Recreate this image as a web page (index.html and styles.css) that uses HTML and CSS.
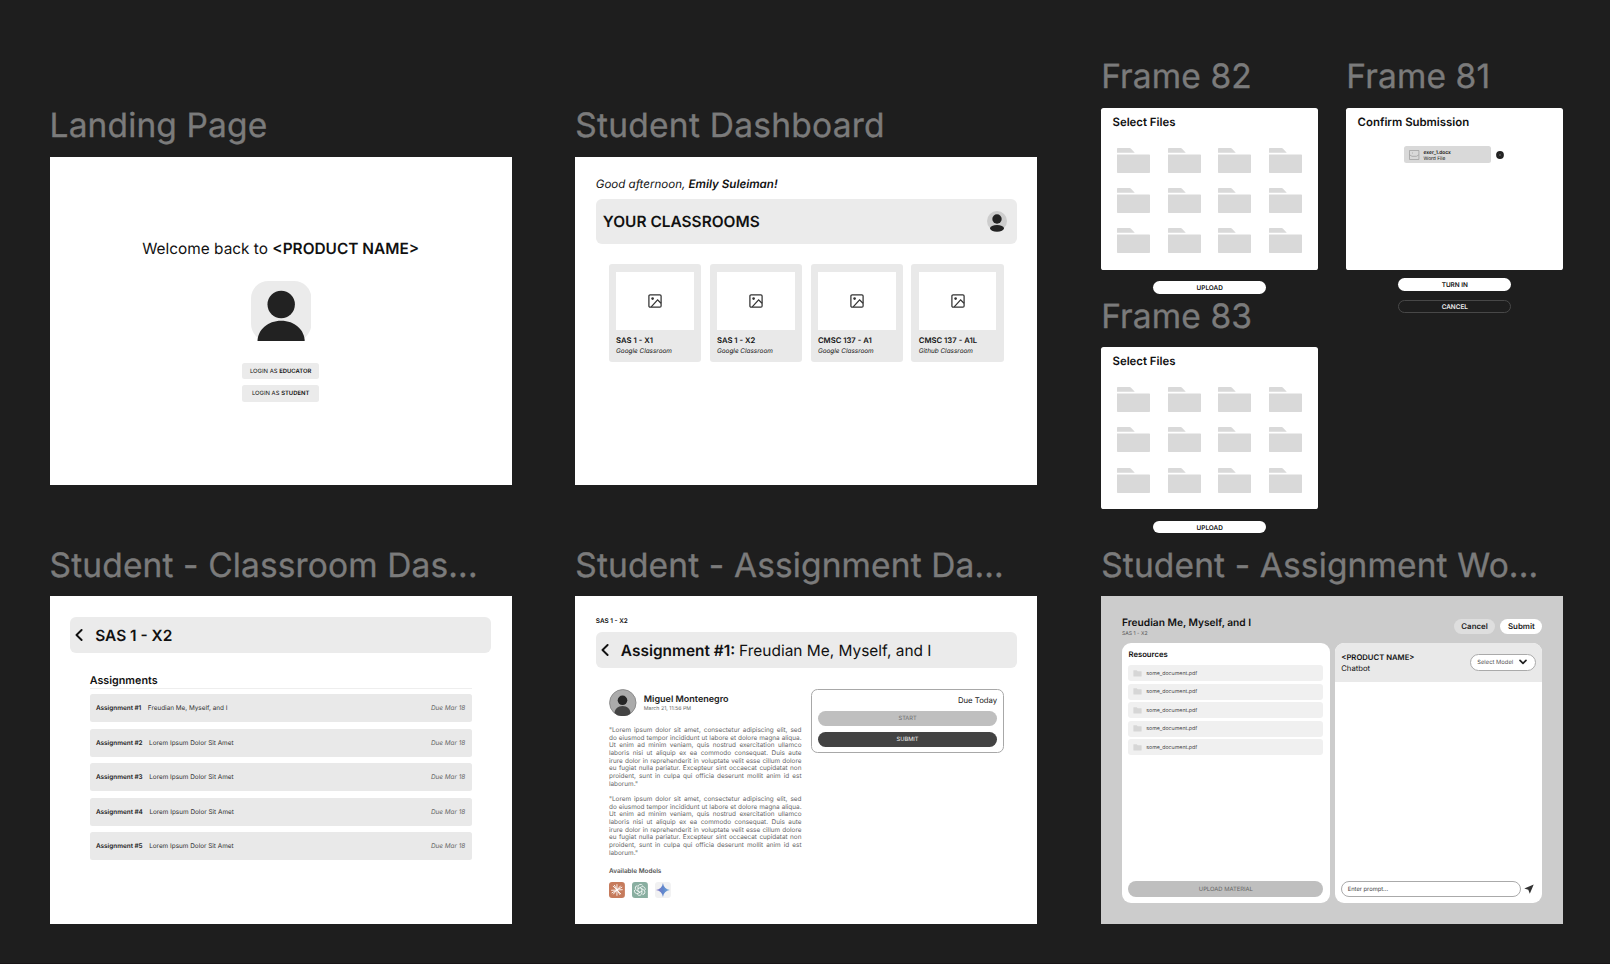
FILE: index.html
```html
<!DOCTYPE html>
<html lang="en">
<head>
<meta charset="utf-8">
<title>Classroom wireframes</title>
<link rel="stylesheet" href="styles.css">
</head>
<body>
<svg class="defs" aria-hidden="true">
  <symbol id="folder" viewBox="0 0 33 25"><path d="M0 .8Q0 0 .8 0H12.6Q13.3 0 13.8.5L17.8 4.8H0ZM0 6.4H32.2Q33 6.4 33 7.2V24.2Q33 25 32.2 25H.8Q0 25 0 24.2Z" fill="#d9d9d9"/></symbol>
  <symbol id="mini-folder" viewBox="0 0 9 7"><path d="M.4.6Q.4.2.8.2H3.6L4.6 1.3H8.2Q8.6 1.3 8.6 1.8V6Q8.6 6.5 8.1 6.5H.9Q.4 6.5.4 6Z" fill="#d6d6d6"/></symbol>
  <symbol id="picture" viewBox="0 0 14 14"><rect x=".9" y=".9" width="12.2" height="12.2" rx="1.2" fill="none" stroke="#333" stroke-width="1.25"/><circle cx="4.6" cy="4.6" r="1.3" fill="#333"/><path d="M3.2 12.8 9.6 5.8 13 9.3" fill="none" stroke="#333" stroke-width="1.25"/></symbol>
  <symbol id="back" viewBox="0 0 8 12"><path d="M6.6 1 1.5 6 6.6 11" fill="none" stroke="#111" stroke-width="1.9" stroke-linecap="round" stroke-linejoin="round"/></symbol>
</svg>
<main class="canvas">

  <section class="board at-landing">
    <h2 class="label label-high">Landing Page</h2>
    <div class="screen landing">
      <p class="welcome">Welcome back to <b>&lt;PRODUCT NAME&gt;</b></p>
      <svg class="portrait" viewBox="0 0 60.4 60.4"><rect width="60.4" height="60.4" rx="17.500" fill="#ebebeb"/><circle cx="30.2" cy="23.500" r="13.700" fill="#222"/><path d="M6.500 60.400C6.500 49 16.500 39.700 30.200 39.700S53.700 49 53.700 60.400Z" fill="#222"/></svg>
      <div class="login">LOGIN AS <b>EDUCATOR</b></div>
      <div class="login">LOGIN AS <b>STUDENT</b></div>
    </div>
  </section>

  <section class="board at-dashboard">
    <h2 class="label label-high label-wide">Student Dashboard</h2>
    <div class="screen dashboard">
      <p class="greeting">Good afternoon, <b>Emily Suleiman!</b></p>
      <header class="bar bar-tall"><span class="bar-title">YOUR CLASSROOMS</span>
        <svg class="user" viewBox="0 0 20 21"><circle cx="10" cy="10" r="10" fill="#cdcdcd"/><circle cx="10" cy="8" r="4.700" fill="#222"/><ellipse cx="10" cy="17.300" rx="7" ry="3.400" fill="#222"/></svg>
      </header>
      <div class="rooms">
        <article class="room"><div class="thumb"><svg><use href="#picture"/></svg></div><h3>SAS 1 - X1</h3><p>Google Classroom</p></article>
        <article class="room"><div class="thumb"><svg><use href="#picture"/></svg></div><h3>SAS 1 - X2</h3><p>Google Classroom</p></article>
        <article class="room"><div class="thumb"><svg><use href="#picture"/></svg></div><h3>CMSC 137 - A1</h3><p>Google Classroom</p></article>
        <article class="room"><div class="thumb"><svg><use href="#picture"/></svg></div><h3>CMSC 137 - A1L</h3><p>Github Classroom</p></article>
      </div>
    </div>
  </section>

  <section class="board dialog at-frame82">
    <h2 class="label label-high">Frame 82</h2>
    <div class="sheet"><h3>Select Files</h3>
      <div class="files">
        <svg><use href="#folder"/></svg><svg><use href="#folder"/></svg><svg><use href="#folder"/></svg><svg><use href="#folder"/></svg>
        <svg><use href="#folder"/></svg><svg><use href="#folder"/></svg><svg><use href="#folder"/></svg><svg><use href="#folder"/></svg>
        <svg><use href="#folder"/></svg><svg><use href="#folder"/></svg><svg><use href="#folder"/></svg><svg><use href="#folder"/></svg>
      </div>
    </div>
    <div class="action">UPLOAD</div>
  </section>

  <section class="board dialog at-frame81">
    <h2 class="label label-high">Frame 81</h2>
    <div class="sheet"><h3>Confirm Submission</h3>
      <div class="attached">
        <div class="doc">
          <svg viewBox="0 0 10.400 10"><path d="M.5.500H9.900V9.500H.5ZM.5 4.800 3 6.300H7.500L9.900 4.800M3 3H4" fill="none" stroke="#999" stroke-width=".7"/></svg>
          <div><b>exer_1.docx</b><span>Word File</span></div>
        </div>
        <svg class="remove" viewBox="0 0 8 8"><circle cx="4" cy="4" r="3.900" fill="#222"/><path d="M2.800 2.800 5.200 5.200M5.200 2.800 2.800 5.200" stroke="#666" stroke-width=".6"/></svg>
      </div>
    </div>
    <div class="action action-high">TURN IN</div>
    <div class="action action-outline">CANCEL</div>
  </section>

  <section class="board dialog at-frame83">
    <h2 class="label">Frame 83</h2>
    <div class="sheet"><h3>Select Files</h3>
      <div class="files">
        <svg><use href="#folder"/></svg><svg><use href="#folder"/></svg><svg><use href="#folder"/></svg><svg><use href="#folder"/></svg>
        <svg><use href="#folder"/></svg><svg><use href="#folder"/></svg><svg><use href="#folder"/></svg><svg><use href="#folder"/></svg>
        <svg><use href="#folder"/></svg><svg><use href="#folder"/></svg><svg><use href="#folder"/></svg><svg><use href="#folder"/></svg>
      </div>
    </div>
    <div class="action">UPLOAD</div>
  </section>

  <section class="board at-classroom">
    <h2 class="label">Student - Classroom Das...</h2>
    <div class="screen classroom">
      <header class="bar"><svg class="back"><use href="#back"/></svg><span class="bar-title">SAS 1 - X2</span></header>
      <div class="assignments">
        <h3>Assignments</h3>
        <div class="row"><b>Assignment #1</b><span>Freudian Me, Myself, and I</span><i>Due Mar 18</i></div>
        <div class="row"><b>Assignment #2</b><span>Lorem Ipsum Dolor Sit Amet</span><i>Due Mar 18</i></div>
        <div class="row"><b>Assignment #3</b><span>Lorem Ipsum Dolor Sit Amet</span><i>Due Mar 18</i></div>
        <div class="row"><b>Assignment #4</b><span>Lorem Ipsum Dolor Sit Amet</span><i>Due Mar 18</i></div>
        <div class="row"><b>Assignment #5</b><span>Lorem Ipsum Dolor Sit Amet</span><i>Due Mar 18</i></div>
      </div>
    </div>
  </section>

  <section class="board at-assignment">
    <h2 class="label">Student - Assignment Da...</h2>
    <div class="screen assignment">
      <p class="crumb">SAS 1 - X2</p>
      <header class="bar"><svg class="back"><use href="#back"/></svg><span class="bar-title">Assignment #1: <em>Freudian Me, Myself, and I</em></span></header>
      <div class="columns">
        <article class="post">
          <div class="author">
            <svg viewBox="0 0 27.600 27.600"><defs><clipPath id="face"><circle cx="13.800" cy="13.800" r="13.300"/></clipPath></defs><circle cx="13.800" cy="13.800" r="13.200" fill="#ababab" stroke="#8c8c8c" stroke-width="1"/><circle cx="13.500" cy="11.300" r="4.800" fill="#262626"/><path clip-path="url(#face)" d="M5.500 28V25C5.500 20 9 17.100 13.600 17.100S21.500 20 21.500 25V28Z" fill="#444"/></svg>
            <div><h4>Miguel Montenegro</h4><time>March 21, 11:56 PM</time></div>
          </div>
          <p>"Lorem ipsum dolor sit amet, consectetur adipiscing elit, sed<br>do eiusmod tempor incididunt ut labore et dolore magna aliqua.<br>Ut enim ad minim veniam, quis nostrud exercitation ullamco<br>laboris nisi ut aliquip ex ea commodo consequat. Duis aute<br>irure dolor in reprehenderit in voluptate velit esse cillum dolore<br>eu fugiat nulla pariatur. Excepteur sint occaecat cupidatat non<br>proident, sunt in culpa qui officia deserunt mollit anim id est<br>laborum."</p>
          <p>"Lorem ipsum dolor sit amet, consectetur adipiscing elit, sed<br>do eiusmod tempor incididunt ut labore et dolore magna aliqua.<br>Ut enim ad minim veniam, quis nostrud exercitation ullamco<br>laboris nisi ut aliquip ex ea commodo consequat. Duis aute<br>irure dolor in reprehenderit in voluptate velit esse cillum dolore<br>eu fugiat nulla pariatur. Excepteur sint occaecat cupidatat non<br>proident, sunt in culpa qui officia deserunt mollit anim id est<br>laborum."</p>
          <h5>Available Models</h5>
          <div class="models">
            <svg viewBox="0 0 16 16"><rect width="16" height="16" rx="3" fill="#c67b5c"/><path d="M8 2.600V13.400M2.600 8.300 13.400 7.700M4.200 4.200 11.800 11.800M11.500 4 4.500 12M5.500 3.300 10.800 12.500M3 10.800 13 5.200" stroke="#fff" stroke-width=".9" stroke-linecap="round"/></svg>
            <svg viewBox="0 0 16 16"><path d="M3 0H13A3 3 0 0 1 16 3V16H3A3 3 0 0 1 0 13V3A3 3 0 0 1 3 0Z" fill="#89aea0"/><g fill="none" stroke="#fff" stroke-width=".8"><path id="petal" d="M6 9.200V4.800A2.600 2.600 0 0 1 10.700 3.400M6 6.900 9.500 4.800A2.700 2.700 0 0 1 13.300 6.800L13.200 8"/><use href="#petal" transform="rotate(120 8 8)"/><use href="#petal" transform="rotate(240 8 8)"/></g></svg>
            <svg viewBox="0 0 16 16"><defs><linearGradient id="spark" x1="0" x2="1"><stop offset="0" stop-color="#8572c4"/><stop offset=".5" stop-color="#5f86cc"/><stop offset="1" stop-color="#73aadb"/></linearGradient></defs><rect width="16" height="16" rx="3" fill="#f1f1f2"/><path d="M8 1C8.600 5 11 7.400 15 8 11 8.600 8.600 11 8 15 7.400 11 5 8.600 1 8 5 7.400 7.400 5 8 1Z" fill="url(#spark)"/></svg>
          </div>
        </article>
        <aside class="due"><p>Due Today</p><div class="pill start">START</div><div class="pill submit">SUBMIT</div></aside>
      </div>
    </div>
  </section>

  <section class="board at-workspace">
    <h2 class="label">Student - Assignment Wo...</h2>
    <div class="screen workspace">
      <header class="top"><div><h3>Freudian Me, Myself, and I</h3><p>SAS 1 - X2</p></div><span class="chip chip-muted">Cancel</span><span class="chip">Submit</span></header>
      <div class="panels">
        <div class="panel resources">
          <h4>Resources</h4>
          <div class="file"><svg><use href="#mini-folder"/></svg><span>some_document.pdf</span></div>
          <div class="file"><svg><use href="#mini-folder"/></svg><span>some_document.pdf</span></div>
          <div class="file"><svg><use href="#mini-folder"/></svg><span>some_document.pdf</span></div>
          <div class="file"><svg><use href="#mini-folder"/></svg><span>some_document.pdf</span></div>
          <div class="file"><svg><use href="#mini-folder"/></svg><span>some_document.pdf</span></div>
          <div class="pill upload">UPLOAD MATERIAL</div>
        </div>
        <div class="panel chat">
          <div class="chat-head"><div><h4>&lt;PRODUCT NAME&gt;</h4><p>Chatbot</p></div>
            <div class="select">Select Model<svg viewBox="0 0 8 6"><path d="M1 1.300 4 4.400 7 1.300" fill="none" stroke="#222" stroke-width="1.700" stroke-linecap="round" stroke-linejoin="round"/></svg></div>
          </div>
          <div class="prompt"><div class="field">Enter prompt...</div><svg viewBox="0 0 10 10"><path d="M9.700.4.300 4.600 4.300 5.700 5.800 9.700Z" fill="#333"/></svg></div>
        </div>
      </div>
    </div>
  </section>
</main>
</body>
</html>
```
FILE: styles.css
```css
* { box-sizing: border-box; margin: 0; padding: 0; }
body { background: #1e1e1e; font-family: Inter, "Liberation Sans", sans-serif; color: #111; text-rendering: geometricPrecision; overflow: hidden; }
svg { display: block; flex: none; }
.defs { position: absolute; width: 0; height: 0; }
b, h3, h4, h5 { font-weight: 600; }

/* Free canvas: each board sits at its own coordinates */
.canvas { position: relative; width: 1610px; height: 964px; overflow: hidden; border-bottom: 1px solid #171416; }
.board { position: absolute; width: 462.100px; }
.dialog { width: 217px; }
.at-landing { left: 49.6px; top: 106px; }
.at-dashboard { left: 575.3px; top: 106px; }
.at-frame82 { left: 1101.2px; top: 56.700px; }
.at-frame81 { left: 1346.3px; top: 56.700px; }
.at-frame83 { left: 1101.2px; top: 296.300px; }
.at-classroom { left: 49.6px; top: 545.200px; }
.at-assignment { left: 575.3px; top: 545.200px; }
.at-workspace { left: 1101.2px; top: 545.200px; }

.label { height: 51px; line-height: 42px; font-size: 33.5px; font-weight: 400; letter-spacing: 0.13px; color: #7b7b7b; -webkit-text-stroke: 0.35px #7b7b7b; white-space: nowrap; }
.label-high { line-height: 40px; }
.label-wide { letter-spacing: 0.25px; }
.screen { display: flex; flex-direction: column; height: 327.500px; background: #fff; }

.bar { display: flex; align-items: center; height: 36.200px; padding: 0 10px 0 5px; border-radius: 6px; background: #ebebeb; }
.bar-tall { height: 45px; padding-left: 7px; justify-content: space-between; }
.bar-title { font-size: 15.45px; line-height: 20px; font-weight: 600; white-space: nowrap; }
.bar:not(.bar-tall) .bar-title { padding-top: 1px; }
.bar-title em { font-style: normal; font-weight: 400; }
.back { width: 8px; height: 12px; margin-right: 12px; }
.user { width: 20px; height: 21px; }

.landing { align-items: center; }
.welcome { margin-top: 81.500px; line-height: 20px; font-size: 15.4px; white-space: nowrap; }
.portrait { width: 60.400px; height: 60.400px; margin: 22px 0 22.300px 1px; }
.login { width: 76.800px; height: 16.200px; margin-bottom: 6.100px; border-radius: 2.500px; background: #ebebeb; text-align: center; font-size: 5.900px; line-height: 18px; }

.dashboard { padding: 20px 20.500px; }
.greeting { height: 22px; line-height: 15px; font-size: 11.550px; font-style: italic; }
.rooms { display: grid; grid-template-columns: repeat(4, 92.300px); gap: 8.600px; margin: 20px 0 0 13px; }
.room { height: 98.300px; padding: 7.500px 7.300px; border-radius: 3px; background: #e9e9e9; white-space: nowrap; }
.thumb { display: grid; place-items: center; height: 58px; background: #fff; }
.thumb svg { width: 14px; height: 14px; }
.room h3 { margin-top: 6.700px; font-size: 7.700px; line-height: 10px; }
.room p { font-size: 6.400px; line-height: 10.500px; font-style: italic; }

.sheet { height: 162px; padding: 8px 11.300px; border-radius: 2.600px; background: #fff; }
.sheet h3 { font-size: 11.400px; line-height: 13px; }
.files { display: grid; grid-template-columns: repeat(4, 33px); gap: 15.300px 17.400px; margin: 18.900px 0 0 5px; }
.files svg { width: 33px; height: 25px; }
.action { width: 113.400px; height: 12.800px; margin: 11.300px auto 0; border-radius: 7px; background: #fff; text-align: center; font-size: 6.400px; line-height: 14.200px; font-weight: 600; }
.action-high { margin-top: 8.300px; }
.action-outline { height: 13.300px; margin-top: 9.200px; border: 1px solid #484848; background: transparent; color: #eee; line-height: 13px; }
.attached { display: flex; align-items: center; gap: 5px; margin: 17.700px 0 0 46.400px; }
.doc { display: flex; align-items: center; gap: 4px; width: 87.400px; height: 16.600px; padding: 1px 5.200px 0; border-radius: 2.500px; background: #d9d9d9; }
.doc svg { width: 10.400px; height: 10px; }
.doc b, .doc span { display: block; font-size: 4.900px; line-height: 6px; white-space: nowrap; }
.doc div { padding-top: 1px; }
.remove { width: 8px; height: 8px; }

.classroom { padding: 20.800px 20.600px; }
.assignments { margin: 20.500px 19.500px 0; }
.assignments h3 { height: 15px; margin-bottom: 5.300px; border-bottom: 1px solid #eee; font-size: 10.750px; line-height: 13px; }
.row { display: flex; align-items: center; height: 28.200px; margin-bottom: 6.350px; padding: 0 6.300px; border-radius: 2.500px; background: #e9e9e9; font-size: 6.400px; line-height: 8px; white-space: nowrap; color: #333; }
.row b { color: #222; margin-right: 6.500px; }
.row i { margin-left: auto; color: #666; }

.assignment { padding: 20.500px; }
.crumb { height: 15.500px; line-height: 9px; font-size: 6.400px; font-weight: 600; }
.columns { display: flex; align-items: flex-start; gap: 9.700px; padding: 20.300px 13px 0 13.200px; }
.post { flex: none; width: 192.500px; color: #666; font-size: 6.400px; line-height: 7.670px; }
.author { display: flex; align-items: center; gap: 7.200px; height: 27.600px; margin-bottom: 10.700px; }
.author svg { width: 27.600px; height: 27.600px; }
.author div { padding-top: 2px; }
.author h4 { font-size: 9px; line-height: 12px; color: #222; white-space: nowrap; }
.author time { display: block; font-size: 5.250px; line-height: 7.500px; }
.post p { margin-bottom: 7.670px; text-align: justify; text-align-last: justify; white-space: nowrap; }
.post h5 { margin-top: 10.500px; font-size: 6.400px; color: #555; }
.models { display: flex; gap: 7.200px; margin-top: 6.200px; }
.models svg { width: 15.900px; height: 16px; }
.due { width: 193.300px; height: 64.700px; padding: 6.600px 5.700px; border: 1px solid #a8a8a8; border-radius: 6.500px; }
.due p { height: 14.700px; line-height: 9px; font-size: 7.750px; text-align: right; color: #222; }
.pill { height: 15.200px; border-radius: 8px; text-align: center; line-height: 16px; font-size: 5.700px; }
.start { background: #bfbfbf; color: #707070; margin-bottom: 5.600px; }
.submit { background: #434343; color: #eee; }

.workspace { background: #ccc; padding: 20.500px 20.800px 20.500px; }
.top { display: flex; align-items: flex-start; height: 26.300px; }
.top div { flex: 1; }
.top h3 { font-size: 10.200px; line-height: 12px; }
.top p { font-size: 5.150px; line-height: 11px; color: #555; }
.chip { width: 42.200px; height: 15.200px; margin: 2px 0 0 5px; border-radius: 8px; background: #fff; text-align: center; font-size: 7.900px; line-height: 15.200px; font-weight: 600; color: #222; }
.chip-muted { width: 41.500px; background: #dedede; }
.panels { flex: 1; display: grid; grid-template-columns: 1fr 1fr; gap: 5px; }
.panel { min-width: 0; display: flex; flex-direction: column; border-radius: 9px; background: #fff; overflow: hidden; }
.panel h4 { font-size: 7.700px; line-height: 10px; }
.resources { padding: 7px 6.500px 6.500px; }
.resources h4 { margin-bottom: 5.500px; }
.file { display: flex; align-items: center; gap: 4px; height: 15.600px; margin-bottom: 2.900px; padding-left: 4.800px; border-radius: 3.200px; background: #f0f0f0; color: #444; font-size: 5.250px; line-height: 8px; }
.file span { padding-top: 1.200px; }
.file svg { width: 9px; height: 7px; }
.upload { margin-top: auto; height: 15.700px; background: #bfbfbf; color: #666; font-size: 5.850px; line-height: 17px; }
.chat-head { display: flex; justify-content: space-between; align-items: center; height: 39px; padding: 0 6.300px 0 6.500px; background: #e9e9e9; }
.chat-head div:first-child { padding-top: 1.500px; }
.chat-head p { font-size: 7.700px; line-height: 11px; }
.select { display: flex; align-items: center; justify-content: space-between; width: 66px; height: 16.700px; padding: 0 8px 0 6px; border: 1px solid #aaa; border-radius: 9px; background: #fff; color: #555; font-size: 5.850px; line-height: 9px; }
.select svg { width: 8px; height: 6px; }
.prompt { display: flex; align-items: center; justify-content: space-between; margin: auto 8.500px 6.300px 6.500px; }
.field { width: 179.500px; height: 15.700px; padding-left: 5.500px; border: 1px solid #aaa; border-radius: 8px; color: #444; font-size: 5.770px; line-height: 15.500px; }
.prompt svg { width: 10px; height: 10px; }
```
